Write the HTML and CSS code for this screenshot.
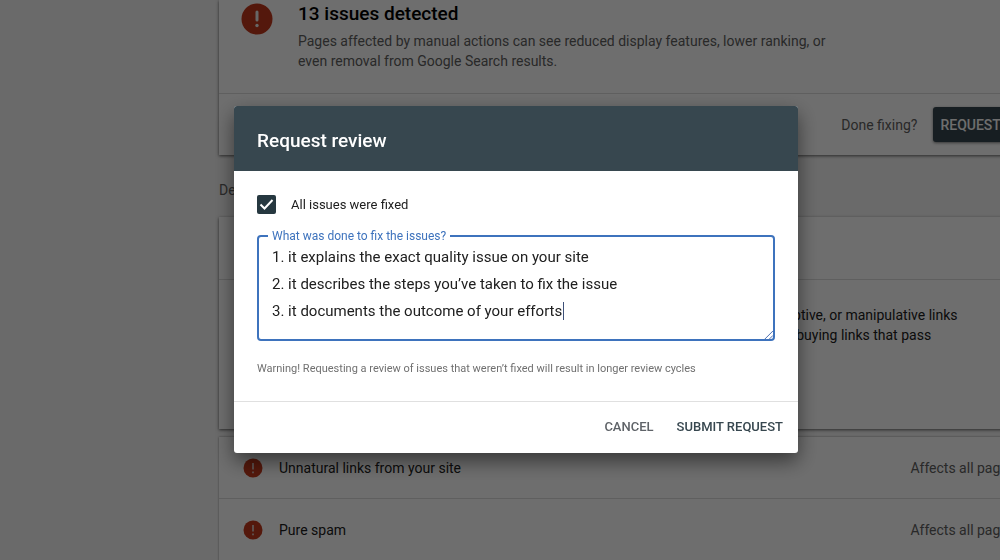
FILE: index.html
```html
<!DOCTYPE html>
<html lang="en">
<head>
  <meta charset="UTF-8">
  <meta name="viewport" content="width=device-width, initial-scale=1.0">
  <title>Manual actions</title>
  <link rel="stylesheet" href="styles.css">
</head>
<body>
  <main class="page">
    <section class="card summary">
      <div class="summary-top">
        <svg class="icon-large" viewBox="0 0 32 32">
          <circle cx="16" cy="16" r="15.5" fill="#c4391c"/>
          <path d="M16 9v8" stroke="#eee" stroke-width="3" stroke-linecap="round"/>
          <circle cx="16" cy="22.5" r="1.7" fill="#eee"/>
        </svg>
        <div>
          <h1>13 issues detected</h1>
          <p>Pages affected by manual actions can see reduced display features, lower ranking, or<br>even removal from Google Search results.</p>
        </div>
      </div>
      <div class="summary-actions">
        <span>Done fixing?</span>
        <button type="button" class="request">REQUEST REVIEW</button>
      </div>
    </section>

    <h2>Detected issues</h2>

    <section class="card open-issue">
      <div class="open-title"></div>
      <p>deceptive, or manipulative links<br>from buying links that pass</p>
    </section>

    <section class="card issues">
      <div class="issue">
        <svg class="icon-small" viewBox="0 0 20 20">
          <circle cx="10" cy="10" r="9.5" fill="#c4391c"/>
          <path d="M10 5v6.5M10 13.5v1.8" stroke="#ddd" stroke-width="1.5"/>
        </svg>
        <span>Unnatural links from your site</span>
        <span class="affects">Affects all pages</span>
      </div>
      <div class="issue">
        <svg class="icon-small" viewBox="0 0 20 20">
          <circle cx="10" cy="10" r="9.5" fill="#c4391c"/>
          <path d="M10 5v6.5M10 13.5v1.8" stroke="#ddd" stroke-width="1.5"/>
        </svg>
        <span>Pure spam</span>
        <span class="affects">Affects all pages</span>
      </div>
    </section>
  </main>

  <div class="overlay">
    <form class="dialog" role="dialog" aria-labelledby="dialogTitle">
      <h2 class="dialog-title" id="dialogTitle">Request review</h2>
      <div class="dialog-body">
        <div class="check">
          <input type="checkbox" id="fixed" checked>
          <label for="fixed">All issues were fixed</label>
        </div>
        <fieldset class="field">
          <legend><label for="details">What was done to fix the issues?</label></legend>
          <textarea id="details" rows="3" spellcheck="false">1. it explains the exact quality issue on your site
2. it describes the steps you’ve taken to fix the issue
3. it documents the outcome of your efforts</textarea>
          <span class="caret"></span>
          <svg class="grip" viewBox="0 0 10 10">
            <path d="M1 10L10 1M6 10L10 6" stroke="#3a5fa8" stroke-width="1"/>
          </svg>
        </fieldset>
        <p class="warning">Warning! Requesting a review of issues that weren’t fixed will result in longer review cycles</p>
      </div>
      <div class="dialog-actions">
        <button type="button" class="cancel">CANCEL</button>
        <button type="button" class="submit">SUBMIT REQUEST</button>
      </div>
    </form>
  </div>
</body>
</html>
```

FILE: styles.css
```css
* {
  box-sizing: border-box;
}
body {
  margin: 0;
  height: 100vh;
  overflow: hidden;
  background-color: #f5f5f5;
  font-family: Roboto, Arial, sans-serif;
  font-size: 14px;
  color: #202020;
}
h1, h2, p {
  margin: 0;
}
button {
  font-family: inherit;
  font-size: 14px;
  font-weight: 500;
  border: none;
  background: none;
  padding: 0;
  cursor: pointer;
}

/* page behind the dialog, runs past the right edge */
.page {
  margin-left: 219px;
  margin-right: -71px;
}
.card {
  background-color: #fff;
  box-shadow: 0 1px 3px rgba(0, 0, 0, 0.6);
}
.summary-top {
  display: flex;
  gap: 25px;
  height: 94px;
  padding: 3px 22px 0;
  border-bottom: 1px solid #dcdcdc;
}
.icon-large {
  width: 32px;
  height: 32px;
}
.summary h1 {
  font-size: 19px;
  font-weight: 500;
  line-height: 22px;
  color: #000;
}
.summary p {
  margin-top: 6px;
  line-height: 20px;
  color: #606060;
}
.summary-actions {
  display: flex;
  justify-content: flex-end;
  align-items: center;
  gap: 16px;
  height: 61px;
  padding-right: 10px;
  color: #606060;
}
.request {
  height: 35px;
  padding: 0 7px;
  border-radius: 3px;
  background-color: #37474f;
  color: #fff;
  box-shadow: 0 1px 3px rgba(0, 0, 0, 0.5);
}
.page h2 {
  padding: 25px 0 17px;
  font-size: 14px;
  font-weight: 400;
  line-height: 20px;
  color: #606060;
}
.open-issue {
  height: 212px;
}
.open-title {
  height: 63px;
  border-bottom: 1px solid #dcdcdc;
}
.open-issue p {
  padding: 25px 0 0 544px;
  line-height: 20px;
}
.issues {
  margin-top: 8px;
  box-shadow: 0 0 2px rgba(0, 0, 0, 0.4);
}
.issue {
  display: flex;
  align-items: center;
  gap: 16px;
  height: 62px;
  padding: 0 56px 0 24px;
  border-bottom: 1px solid #dcdcdc;
}
.icon-small {
  width: 20px;
  height: 20px;
}
.affects {
  margin-left: auto;
  color: #606060;
}

.overlay {
  position: fixed;
  inset: 0;
  display: flex;
  justify-content: center;
  align-items: center;
  padding: 0 0 1px 32px;
  background-color: rgba(0, 0, 0, 0.57);
}
.dialog {
  width: 100%;
  max-width: 564px;
  border-radius: 3px;
  overflow: hidden;
  background-color: #fff;
  box-shadow: 0 8px 20px rgba(0, 0, 0, 0.5);
}
.dialog-title {
  padding: 23px 23px 18px;
  background-color: #37474f;
  color: #fff;
  font-size: 19px;
  font-weight: 500;
  line-height: 24px;
}
.dialog-body {
  padding: 24px 23px;
  border-bottom: 1px solid #e0e0e0;
}
.check {
  display: flex;
  align-items: center;
  gap: 15px;
  font-size: 13px;
}
.check input {
  appearance: none;
  width: 19px;
  height: 19px;
  margin: 0;
  border-radius: 2px;
  background: #263840 url("data:image/svg+xml,%3Csvg xmlns='http://www.w3.org/2000/svg' viewBox='0 0 19 19'%3E%3Cpath d='M3.5 9.5l4 4 8-8.5' fill='none' stroke='white' stroke-width='2'/%3E%3C/svg%3E");
}
.field {
  position: relative;
  margin: 14px 0 0;
  padding: 0 13px;
  border: 2px solid #3e73bd;
  border-radius: 4px;
}
.field legend {
  margin-left: -4px;
  padding: 0 4px;
  font-size: 12px;
  line-height: 16px;
  color: #3e73bd;
}
.field textarea {
  display: block;
  width: 100%;
  height: 95px;
  padding: 0;
  border: none;
  outline: none;
  resize: none;
  overflow: hidden;
  background: none;
  font-family: inherit;
  font-size: 15px;
  line-height: 27px;
  color: #202020;
}
.caret {
  position: absolute;
  left: 304px;
  top: 58px;
  width: 1px;
  height: 18px;
  background-color: #3e5078;
}
.grip {
  position: absolute;
  right: 0;
  bottom: 0;
  width: 9px;
  height: 9px;
}
.warning {
  margin-top: 20px;
  font-size: 11px;
  line-height: 16px;
  color: #707070;
}
.dialog-actions {
  display: flex;
  justify-content: flex-end;
  gap: 23px;
  padding: 16px 15px 17px;
}
.dialog-actions button {
  font-size: 13px;
  line-height: 18px;
}
.cancel {
  color: #5f6368;
}
.submit {
  color: #37474f;
}
```
